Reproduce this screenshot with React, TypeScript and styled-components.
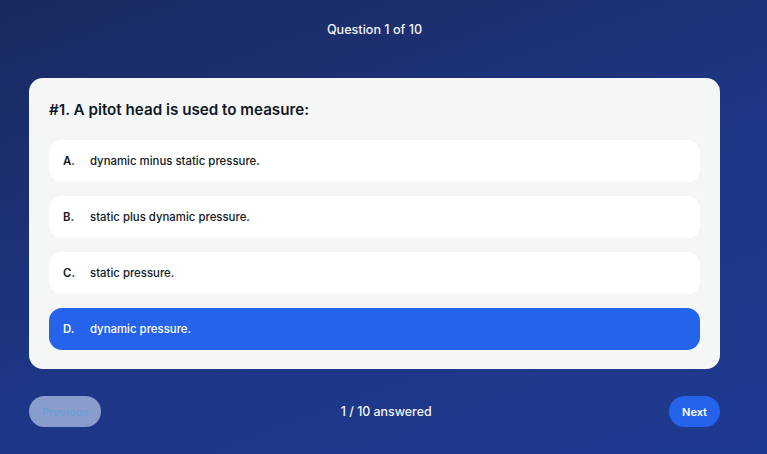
import React from "react";
import styled, { createGlobalStyle } from "styled-components";

const Global = createGlobalStyle`
  html, body { margin: 0; padding: 0; height: 100%; }
  body { font-family: Inter, "Noto Sans", sans-serif; }
  #root { min-height: 100vh; }
`;

const Page = styled.div`
  min-height: 454px;
  box-sizing: border-box;
  background: linear-gradient(160deg, #1a2a5e 0%, #1e3686 55%, #1e3a8f 100%);
  padding: 21px 47px 0 29px;
  display: flex;
  flex-direction: column;
`;

const Header = styled.div`
  color: #f1f5f9;
  font-size: 12.6px;
  font-weight: 500;
  text-align: center;
  line-height: 18px;
  margin-bottom: 39px;
`;

const Card = styled.div`
  background: #f5f7f7;
  border-radius: 14px;
  padding: 20px 20px 19px;
  display: flex;
  flex-direction: column;
`;

const Title = styled.h2`
  margin: 1px 0 19px;
  font-size: 15.2px;
  font-weight: 600;
  color: #111827;
  line-height: 22px;
`;

const Options = styled.div`
  display: flex;
  flex-direction: column;
  gap: 14px;
`;

const Option = styled.div<{ $selected?: boolean }>`
  height: 42px;
  border-radius: 13px;
  background: ${(p) => (p.$selected ? "#2563eb" : "#ffffff")};
  color: ${(p) => (p.$selected ? "#ffffff" : "#111827")};
  display: flex;
  align-items: center;
  padding: 0 14px;
  font-size: 11.4px;
  font-weight: 500;
`;

const Letter = styled.span`
  font-weight: 600;
  width: 27px;
  flex: none;
`;

const Footer = styled.div`
  display: flex;
  align-items: center;
  justify-content: space-between;
  margin-top: 27px;
`;

const NavButton = styled.button<{ $disabled?: boolean }>`
  font-family: inherit;
  border: none;
  height: 31px;
  border-radius: 16px;
  padding: 0 13px;
  font-size: 11px;
  font-weight: 600;
  background: ${(p) => (p.$disabled ? "#8a9ccb" : "#2563eb")};
  color: ${(p) => (p.$disabled ? "#6aa0d8" : "#ffffff")};
  cursor: pointer;
`;

const Status = styled.div`
  color: #f1f5f9;
  font-size: 12.4px;
  font-weight: 500;
  margin-left: 2px;
`;

const options = [
  { l: "A.", t: "dynamic minus static pressure." },
  { l: "B.", t: "static plus dynamic pressure." },
  { l: "C.", t: "static pressure." },
  { l: "D.", t: "dynamic pressure." },
];

export default function App() {
  return (
    <>
      <Global />
      <Page>
        <Header>Question 1 of 10</Header>
        <Card>
          <Title>#1. A pitot head is used to measure:</Title>
          <Options>
            {options.map((o, i) => (
              <Option key={o.l} $selected={i === 3}>
                <Letter>{o.l}</Letter>
                {o.t}
              </Option>
            ))}
          </Options>
        </Card>
        <Footer>
          <NavButton $disabled>Previous</NavButton>
          <Status>1 / 10 answered</Status>
          <NavButton>Next</NavButton>
        </Footer>
      </Page>
    </>
  );
}
